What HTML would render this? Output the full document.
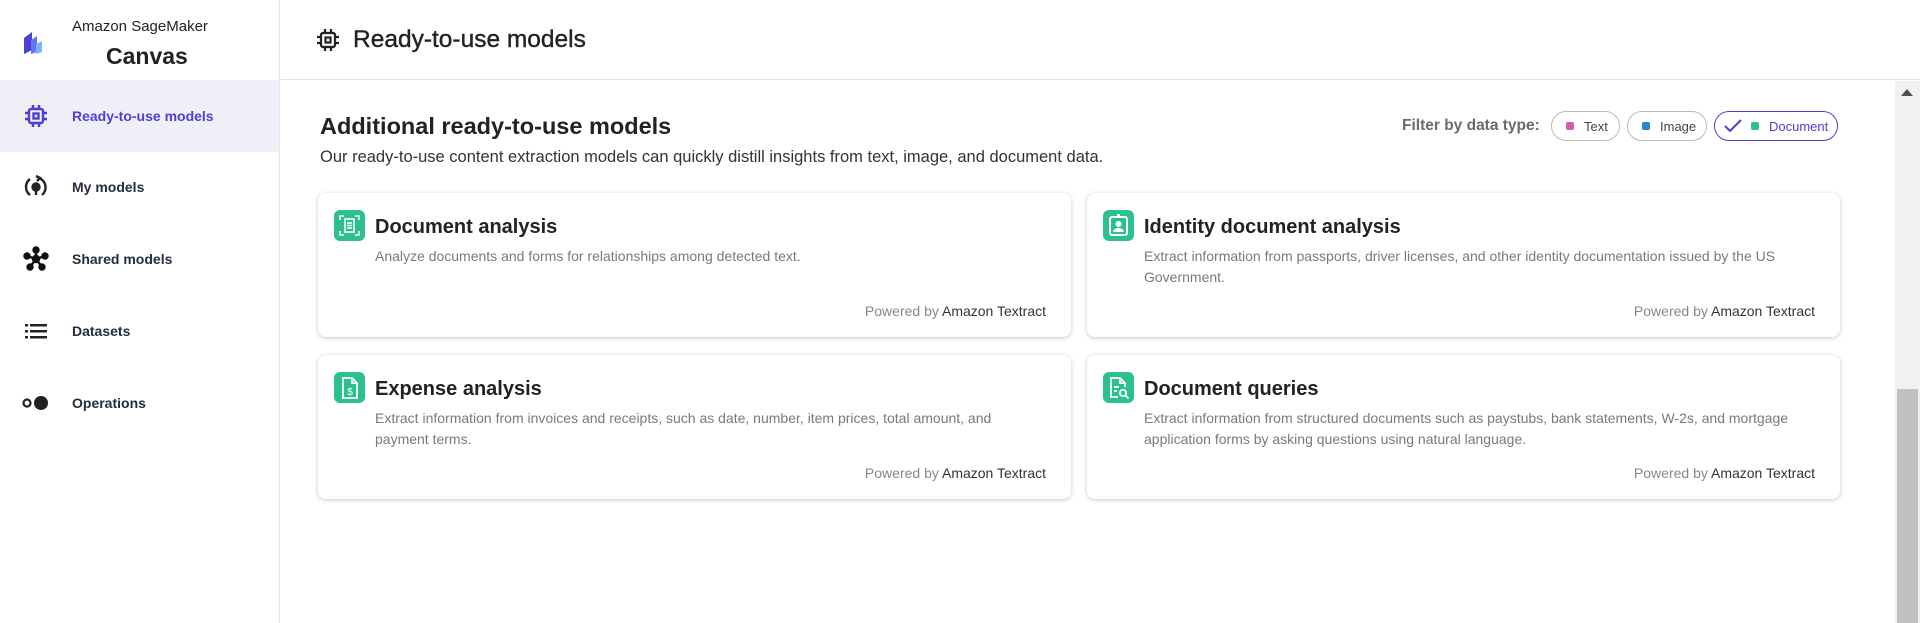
<!DOCTYPE html>
<html><head><meta charset="utf-8"><style>
*{box-sizing:border-box;margin:0;padding:0}
body{width:1920px;height:623px;overflow:hidden;font-family:"Liberation Sans",sans-serif;background:#fff;color:#16191f;position:relative}
.side{position:absolute;left:0;top:0;width:280px;height:623px;border-right:1px solid #e4e4e4;background:#fff}
.brand1{position:absolute;left:72px;top:18px;font-size:15px;color:#222}
.brand2{position:absolute;left:106px;top:43px;font-size:23px;font-weight:bold;color:#222}
.nav{position:absolute;left:0;width:279px;height:72px;display:flex;align-items:center;font-size:14px;font-weight:bold;color:#232f3e}
.nav .ic{width:72px;display:flex;justify-content:center;padding-left:0}
.nav.act{background:#f0eff8;color:#4b3fd6;font-weight:bold}
.head{position:absolute;left:281px;top:0;right:0;height:80px;border-bottom:1px solid #e4e4e4;background:#fff}
.head .t{position:absolute;left:72px;top:26px;font-size:24.5px;color:#232323;-webkit-text-stroke:0.4px #232323}
.main{position:absolute;left:281px;top:81px;width:1614px;height:542px;background:#fff}
.sb{position:absolute;left:1895px;top:81px;width:25px;height:542px;background:#f1f1f1}
.thumb{position:absolute;left:1897px;top:389px;width:21px;height:234px;background:#c1c1c1}
h2{position:absolute;left:320px;top:113px;font-size:23.5px;font-weight:bold;color:#222}
.sub{position:absolute;left:320px;top:148px;font-size:16.5px;color:#333}
.flt{position:absolute;left:1402px;top:117px;font-size:15.5px;font-weight:bold;color:#6b6b6b}
.chip{position:absolute;top:111px;height:30px;border:1px solid #bbb;border-radius:15px;font-size:13px;color:#444;display:flex;align-items:center;padding-left:14px}
.chip i{display:inline-block;width:8px;height:8px;border-radius:2px;margin-right:10px}
.card{position:absolute;width:753px;height:144px;background:#fff;border-radius:8px;box-shadow:0 1px 5px rgba(0,0,0,.22)}
.card .ico{position:absolute;left:16px;top:17px;width:31px;height:31px;border-radius:6px;background:#2bc08e}
.card .tt{position:absolute;left:57px;top:23px;font-size:20px;font-weight:bold;color:#222}
.card .d{position:absolute;left:57px;top:53px;width:665px;font-size:14px;line-height:21px;color:#7a7a7a}
.card .p{position:absolute;right:25px;top:110px;font-size:14px;color:#888}
.card .p b{font-weight:normal;color:#333}
</style></head><body>
<div class="side">
 <svg style="position:absolute;left:22px;top:30px" width="24" height="26" viewBox="0 0 24 26"><path d="M2 8 L10 2 V20 L2 24Z" fill="#4b3fd6"/><path d="M9 10 L15 6 V22 L9 24Z" fill="#5a7bf0"/><path d="M14 14 L20 11 V22 L14 24Z" fill="#7fb3ff"/></svg>
 <div class="brand1">Amazon SageMaker</div>
 <div class="brand2">Canvas</div>
 <div class="nav act" style="top:80px"><div class="ic"><svg width="24" height="24" viewBox="0 0 24 24" fill="none" stroke="#4b3fd6" stroke-width="2.4"><rect x="5" y="5" width="14" height="14" rx="2"/><rect x="9.5" y="9.5" width="5" height="5"/><path d="M9 1v4M15 1v4M9 19v4M15 19v4M1 9h4M1 15h4M19 9h4M19 15h4"/></svg></div>Ready-to-use models</div>
 <div class="nav" style="top:151px"><div class="ic"><svg width="26" height="26" viewBox="0 0 26 26" fill="none" stroke="#222" stroke-width="2.4"><path d="M7 5 A10 10 0 0 0 7 21"/><path d="M19 21 A10 10 0 0 0 16 4"/><path d="M13 2 l4 2 -3 3" /><circle cx="13" cy="13" r="3.5" fill="#222"/><path d="M13 16v5"/></svg></div>My models</div>
 <div class="nav" style="top:223px"><div class="ic"><svg width="26" height="26" viewBox="0 0 26 26" fill="#111" stroke="#111" stroke-width="2.4"><path d="M13 13L13 4M13 13L4 10M13 13L22 10M13 13L7 21M13 13L19 21"/><circle cx="13" cy="4" r="2.5"/><circle cx="4" cy="10" r="2.5"/><circle cx="22" cy="10" r="2.5"/><circle cx="7" cy="21" r="2.5"/><circle cx="19" cy="21" r="2.5"/><circle cx="13" cy="13" r="3"/></svg></div>Shared models</div>
 <div class="nav" style="top:295px"><div class="ic"><svg width="24" height="20" viewBox="0 0 24 20" fill="#222"><rect x="1" y="3" width="3" height="2.5"/><rect x="6" y="3" width="17" height="2.5"/><rect x="1" y="9" width="3" height="2.5"/><rect x="6" y="9" width="17" height="2.5"/><rect x="1" y="15" width="3" height="2.5"/><rect x="6" y="15" width="17" height="2.5"/></svg></div>Datasets</div>
 <div class="nav" style="top:367px"><div class="ic"><svg width="30" height="18" viewBox="0 0 30 18"><circle cx="6" cy="9" r="3.5" fill="none" stroke="#222" stroke-width="2.2"/><circle cx="20" cy="9" r="7" fill="#222"/></svg></div>Operations</div>
</div>
<div class="head">
 <svg style="position:absolute;left:35px;top:28px" width="24" height="24" viewBox="0 0 24 24" fill="none" stroke="#222" stroke-width="2.2"><rect x="5" y="5" width="14" height="14" rx="2"/><rect x="9.5" y="9.5" width="5" height="5"/><path d="M9 1v4M15 1v4M9 19v4M15 19v4M1 9h4M1 15h4M19 9h4M19 15h4"/></svg>
 <div class="t">Ready-to-use models</div>
</div>
<div class="main"></div>
<div class="sb"></div><div class="thumb"></div>
<svg style="position:absolute;left:1901px;top:88px" width="12" height="8"><path d="M0 8L6 1L12 8Z" fill="#505050"/></svg>
<h2>Additional ready-to-use models</h2>
<div class="sub">Our ready-to-use content extraction models can quickly distill insights from text, image, and document data.</div>
<div class="flt">Filter by data type:</div>
<div class="chip" style="left:1551px;width:69px"><i style="background:#e055b5"></i>Text</div>
<div class="chip" style="left:1627px;width:80px"><i style="background:#1f88e0"></i>Image</div>
<div class="chip" style="left:1714px;width:124px;border-color:#4b3fd6;color:#4b3fd6;padding-left:8px"><svg width="20" height="14" viewBox="0 0 20 14" style="margin-right:8px"><path d="M2 7l5 5L18 1" fill="none" stroke="#4b3fd6" stroke-width="2"/></svg><i style="background:#2bc08e"></i>Document</div>

<div class="card" style="left:318px;top:193px"><div class="ico"><svg width="31" height="31" viewBox="0 0 31 31" fill="none" stroke="#fff" stroke-width="1.6"><path d="M6 10V6h4M21 6h4v4M25 21v4h-4M10 25H6v-4"/><rect x="11" y="9" width="9" height="13"/><path d="M13 13h5M13 15.5h5M13 18h5"/></svg></div><div class="tt">Document analysis</div><div class="d">Analyze documents and forms for relationships among detected text.</div><div class="p">Powered by <b>Amazon Textract</b></div></div>
<div class="card" style="left:1087px;top:193px"><div class="ico"><svg width="31" height="31" viewBox="0 0 31 31" fill="#fff"><rect x="7" y="7" width="17" height="18" rx="2" fill="none" stroke="#fff" stroke-width="2"/><rect x="14" y="4" width="3" height="4"/><circle cx="15.5" cy="14" r="3"/><path d="M10 22a5.5 4 0 0 1 11 0z"/></svg></div><div class="tt">Identity document analysis</div><div class="d">Extract information from passports, driver licenses, and other identity documentation issued by the US Government.</div><div class="p">Powered by <b>Amazon Textract</b></div></div>
<div class="card" style="left:318px;top:355px"><div class="ico"><svg width="31" height="31" viewBox="0 0 31 31" fill="none" stroke="#fff" stroke-width="1.8"><path d="M9 6h9l5 5v15H9z"/><path d="M18 6v5h5"/><text x="16" y="23" font-size="10" fill="#fff" stroke="none" text-anchor="middle" font-family="Liberation Sans">$</text></svg></div><div class="tt">Expense analysis</div><div class="d">Extract information from invoices and receipts, such as date, number, item prices, total amount, and payment terms.</div><div class="p">Powered by <b>Amazon Textract</b></div></div>
<div class="card" style="left:1087px;top:355px"><div class="ico"><svg width="31" height="31" viewBox="0 0 31 31" fill="none" stroke="#fff" stroke-width="1.8"><path d="M15 25H8V6h9l5 5v4"/><path d="M17 6v5h5M11 15h5M11 19h3"/><circle cx="20" cy="21" r="3.2"/><path d="M22.5 23.5l3 3"/></svg></div><div class="tt">Document queries</div><div class="d">Extract information from structured documents such as paystubs, bank statements, W-2s, and mortgage application forms by asking questions using natural language.</div><div class="p">Powered by <b>Amazon Textract</b></div></div>
</body></html>
